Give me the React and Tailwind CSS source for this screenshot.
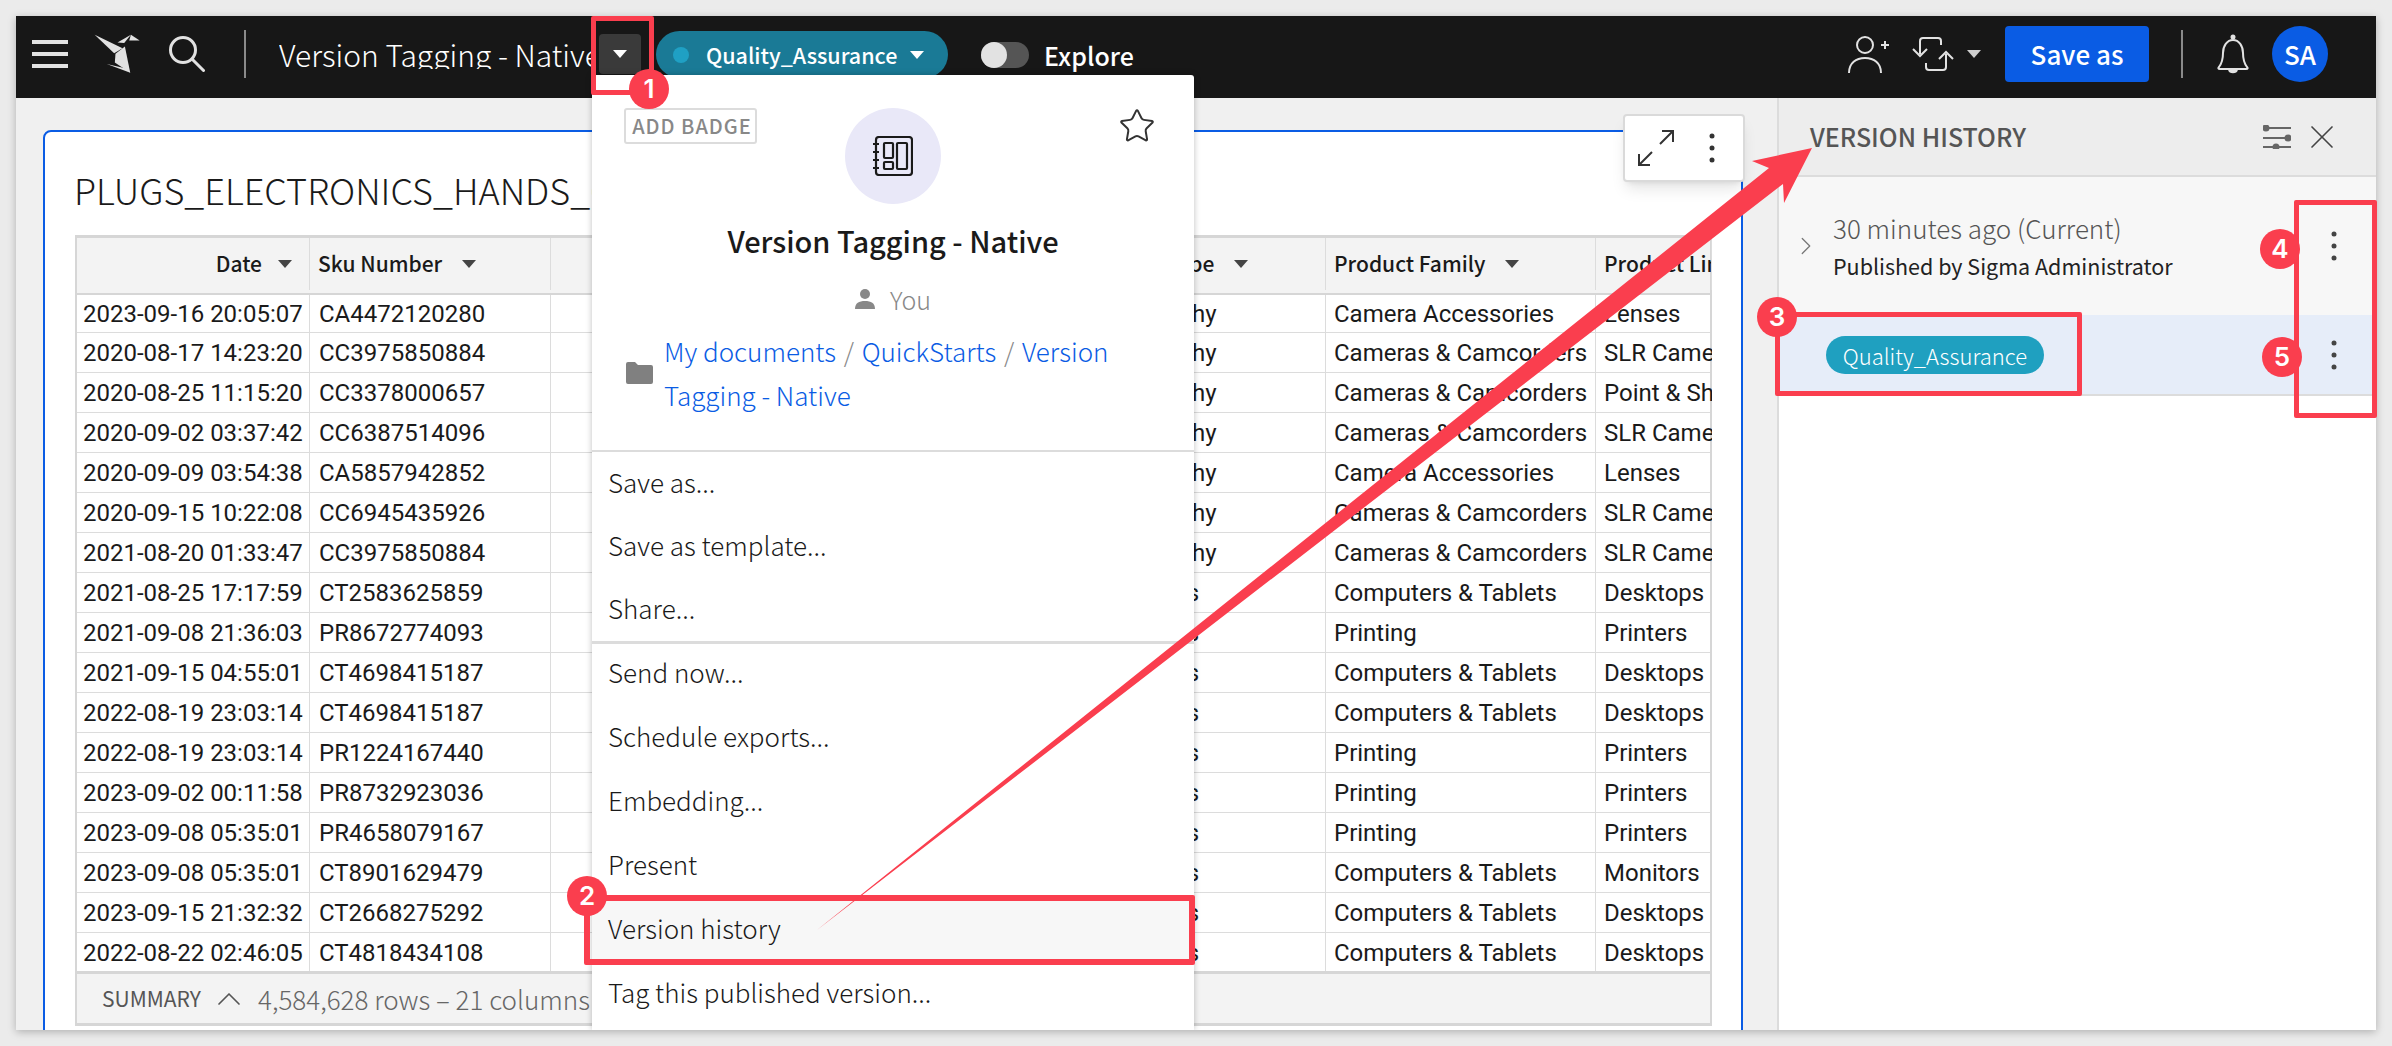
import { Star, X, ChevronRight, ChevronUp } from 'lucide-react'

const uiFont = "font-['Noto_Sans_CJK_SC','Liberation_Sans',sans-serif]"

const CC = 'Cameras & Camcorders'
const CA = 'Camera Accessories'
const CT = 'Computers & Tablets'
const rows = [
  ['2023-09-16 20:05:07', 'CA4472120280', 'Photography', CA, 'Lenses'],
  ['2020-08-17 14:23:20', 'CC3975850884', 'Photography', CC, 'SLR Cameras'],
  ['2020-08-25 11:15:20', 'CC3378000657', 'Photography', CC, 'Point & Shoot'],
  ['2020-09-02 03:37:42', 'CC6387514096', 'Photography', CC, 'SLR Cameras'],
  ['2020-09-09 03:54:38', 'CA5857942852', 'Photography', CA, 'Lenses'],
  ['2020-09-15 10:22:08', 'CC6945435926', 'Photography', CC, 'SLR Cameras'],
  ['2021-08-20 01:33:47', 'CC3975850884', 'Photography', CC, 'SLR Cameras'],
  ['2021-08-25 17:17:59', 'CT2583625859', 'Computers', CT, 'Desktops'],
  ['2021-09-08 21:36:03', 'PR8672774093', 'Computers', 'Printing', 'Printers'],
  ['2021-09-15 04:55:01', 'CT4698415187', 'Computers', CT, 'Desktops'],
  ['2022-08-19 23:03:14', 'CT4698415187', 'Computers', CT, 'Desktops'],
  ['2022-08-19 23:03:14', 'PR1224167440', 'Computers', 'Printing', 'Printers'],
  ['2023-09-02 00:11:58', 'PR8732923036', 'Computers', 'Printing', 'Printers'],
  ['2023-09-08 05:35:01', 'PR4658079167', 'Computers', 'Printing', 'Printers'],
  ['2023-09-08 05:35:01', 'CT8901629479', 'Computers', CT, 'Monitors'],
  ['2023-09-15 21:32:32', 'CT2668275292', 'Computers', CT, 'Desktops'],
  ['2022-08-22 02:46:05', 'CT4818434108', 'Computers', CT, 'Desktops'],
]

const gridCols = 'grid grid-cols-[233px_241px_522px_253px_270px_116px]'

function Caret({ className = '' }) {
  return (
    <svg width="14" height="8" viewBox="0 0 14 8" className={className}>
      <path d="M0 0h14L7 8z" fill="currentColor"/>
    </svg>
  )
}

function Dots({ className = '' }) {
  return (
    <svg width="6" height="30" viewBox="0 0 6 30" className={className}>
      <circle cx="3" cy="3" r="2.5" fill="currentColor"/>
      <circle cx="3" cy="15" r="2.5" fill="currentColor"/>
      <circle cx="3" cy="27" r="2.5" fill="currentColor"/>
    </svg>
  )
}

function Logo() {
  return (
    <svg width="47" height="42" viewBox="220 40 140 125" fill="#e2e2e2" className="shrink-0">
      <path d="M222 45 305 85 280 100z"/>
      <path d="M284 102 312 80 328 158 282 128z"/>
      <path d="M258 132 316 146 328 158z"/>
      <path d="M290 68 330 45 310 70z"/>
      <path d="M330 45 356 62 325 62z"/>
    </svg>
  )
}

function Header() {
  return (
    <div className="h-[82px] pb-1.5 bg-[#171717] flex items-center shrink-0 text-white">
      <div className="ml-4 w-9 flex flex-col gap-2 shrink-0">
        <span className="h-1 bg-[#e2e2e2]"/>
        <span className="h-1 bg-[#e2e2e2]"/>
        <span className="h-1 bg-[#e2e2e2]"/>
      </div>
      <div className="ml-[26px]"><Logo/></div>
      <svg width="36" height="36" viewBox="0 0 36 36" fill="none" stroke="#e2e2e2" strokeWidth="3" strokeLinecap="round" className="ml-7 shrink-0">
        <circle cx="14" cy="14" r="12.5"/>
        <path d="M23.5 23.5 34.5 34.5"/>
      </svg>
      <div className="ml-[39px] w-0.5 h-12 bg-[#8a8a8a] shrink-0"/>
      <div className="ml-[33px] w-[314px] text-[30px] font-light whitespace-nowrap overflow-hidden leading-none">Version Tagging - Native</div>
      <div className="ml-1.5 w-[42px] h-10 rounded bg-[#3a3a3a] flex items-center justify-center shrink-0">
        <Caret className="text-white"/>
      </div>
      <div className="ml-[15px] w-[292px] h-[47px] self-start mt-[15px] rounded-full bg-[#1a7a96] flex items-center shrink-0">
        <span className="ml-[17px] w-4 h-4 rounded-full bg-[#1fa0c4]"/>
        <span className="ml-[17px] text-[21.5px] font-medium leading-none">Quality_Assurance</span>
        <Caret className="ml-[13px] text-white"/>
      </div>
      <div className="ml-[33px] mt-0.5 w-12 h-[26px] rounded-full bg-[#555555] shrink-0">
        <div className="w-[26px] h-[26px] rounded-full bg-[#e2e2e2]"/>
      </div>
      <span className="ml-[15px] mt-0.5 text-[25px] font-medium leading-none">Explore</span>
      <div className="ml-auto flex items-center pr-12">
        <svg width="42" height="40" viewBox="0 0 42 40" fill="none" stroke="#e2e2e2" strokeWidth="2" className="shrink-0">
          <circle cx="17" cy="11" r="8"/>
          <path d="M1 39c0-10 7-15 16-15s16 5 16 15"/>
          <path d="M33 11h8M37 7v8"/>
        </svg>
        <svg width="42" height="34" viewBox="0 0 42 34" fill="none" stroke="#e2e2e2" strokeWidth="2" className="ml-[22px] shrink-0">
          <path d="M8 17V4a3 3 0 0 1 3-3h15a3 3 0 0 1 3 3v4M34 17v13a3 3 0 0 1-3 3H17a3 3 0 0 1-3-3v-4"/>
          <path d="M1 12l7 7 7-7M27 22l7-7 7 7"/>
        </svg>
        <Caret className="ml-[13px] text-[#cfcfcf]"/>
        <div className="ml-6 w-36 h-14 rounded-[4px] bg-[#0a5ce4] flex items-center justify-center text-[26px] font-medium leading-none">Save as</div>
        <div className="ml-8 w-0.5 h-12 bg-[#8a8a8a]"/>
        <svg width="36" height="40" viewBox="0 0 36 40" fill="none" stroke="#e2e2e2" strokeWidth="2" className="ml-8 shrink-0">
          <path d="M4 33c3-4 4-7 4-14 0-7 4-13 10-13s10 6 10 13c0 7 1 10 4 14 1 1 1 2-1 2H5c-2 0-2-1-1-2z"/>
          <circle cx="18" cy="3" r="1.5" fill="#e2e2e2"/>
          <path d="M14 36c1 3 7 3 8 0" fill="#e2e2e2"/>
        </svg>
        <div className="ml-[21px] w-14 h-14 rounded-full bg-[#0a5ce4] flex items-center justify-center text-[26px] font-medium leading-none">SA</div>
      </div>
    </div>
  )
}

function DataTable() {
  const heads = [
    { label: 'Date', right: true },
    { label: 'Sku Number' },
    { label: '' },
    { label: 'Product Type' },
    { label: 'Product Family' },
    { label: 'Product Line', clip: true },
  ]
  return (
    <div className="w-[1637px] border-x-2 border-[#d6d6d6] flex flex-col">
      <div className={`${gridCols} h-[58px] pb-[3px] border-t-[3px] border-[#d6d6d6] bg-[#f3f3f3]`}>
        {heads.map((h, i) => (
          <div key={i} className={`flex items-center px-2 border-r border-[#dcdcdc] overflow-hidden whitespace-nowrap text-[21px] font-medium text-[#1a1a1a] ${h.right ? 'justify-end' : ''}`}>
            <span>{h.label}</span>
            {h.label && !h.clip && <Caret className={`${h.right ? 'ml-4 mr-[9px]' : 'ml-5 mr-[10px]'} text-[#444444] shrink-0`}/>}
          </div>
        ))}
      </div>
      {rows.map((r, i) => (
        <div key={i} className={`${gridCols} h-10 box-border border-b border-[#dcdcdc] ${i === 0 ? 'border-t-2 border-t-[#d6d6d6]' : ''} font-['Roboto',sans-serif] text-[24px] text-[#1a1a1a]`}>
          <div className="pl-1.5 flex items-center border-r border-[#dcdcdc] whitespace-nowrap overflow-hidden">{r[0]}</div>
          <div className="pl-[9px] flex items-center border-r border-[#dcdcdc] whitespace-nowrap overflow-hidden">{r[1]}</div>
          <div className="border-r border-[#dcdcdc]"/>
          <div className="px-2 flex items-center border-r border-[#dcdcdc] whitespace-nowrap overflow-hidden">{r[2]}</div>
          <div className="px-2 flex items-center border-r border-[#dcdcdc] whitespace-nowrap overflow-hidden">{r[3]}</div>
          <div className="px-2 flex items-center whitespace-nowrap overflow-hidden">{r[4]}</div>
        </div>
      ))}
      <div className="h-[55px] -mt-[2px] bg-[#f3f3f3] border-y-[3px] border-[#d6d6d6] flex items-center pl-[25px] text-[#666666]">
        <span className="text-[21px] text-[#555555]">SUMMARY</span>
        <ChevronUp size={40} strokeWidth={1} className="ml-2 text-[#555555]"/>
        <span className="ml-[9px] text-[26px] font-light whitespace-nowrap">4,584,628 rows – 21 columns</span>
      </div>
    </div>
  )
}

function Main() {
  return (
    <div className="relative flex-1 bg-[#f0f0f0] pl-[27px] pt-8 overflow-hidden">
      <div className="w-[1700px] h-[1000px] bg-white border-2 border-[#0a5ce4] rounded-tl-lg pl-[30px]">
        <div className="h-[103px] pt-[25px] -ml-px text-[36px] leading-[64px] text-[#1a1a1a] font-light whitespace-nowrap">PLUGS_ELECTRONICS_HANDS_ON_LAB</div>
        <DataTable/>
      </div>
      <div className="absolute left-[1607px] top-[16px] w-[122px] h-[68px] bg-white rounded-[4px] border-2 border-[#dadada] shadow-lg flex items-center">
        <svg width="36" height="36" viewBox="0 0 36 36" fill="none" stroke="#333333" strokeWidth="2" className="ml-[13px]">
          <path d="M22 14 35 1M24 1h11v11M14 22 1 35M1 24v11h11"/>
        </svg>
        <Dots className="ml-[35px] text-[#333333]"/>
      </div>
    </div>
  )
}

function VersionPanel() {
  return (
    <div className="w-[599px] shrink-0 border-l-2 border-[#dcdcdc] bg-white flex flex-col">
      <div className="h-[79px] bg-[#ededed] border-b-2 border-[#dcdcdc] flex items-center pl-[31px] shrink-0">
        <span className="text-[25px] font-medium text-[#555555] leading-none">VERSION HISTORY</span>
        <svg width="28" height="24" viewBox="0 0 28 24" fill="none" stroke="#666666" strokeWidth="2" className="ml-auto">
          <path d="M2 3h26M0 13h26M0 22h28"/>
          <circle cx="3" cy="3" r="2.5" fill="#666666"/>
          <circle cx="25" cy="13" r="2.5" fill="#666666"/>
          <circle cx="13" cy="22" r="2.5" fill="#666666"/>
        </svg>
        <X size={40} strokeWidth={1} className="ml-[11px] mr-[34px] text-[#444444]"/>
      </div>
      <div className="h-[138px] bg-[#f7f7f7] flex items-center relative shrink-0">
        <ChevronRight size={30} strokeWidth={1} className="ml-3 text-[#777777]"/>
        <div className="ml-[12px] flex flex-col gap-[9px]">
          <span className="text-[26px] font-light text-[#555555] leading-[30px]">30 minutes ago (Current)</span>
          <span className="text-[21.5px] text-[#222222] leading-[28px]">Published by Sigma Administrator</span>
        </div>
        <Dots className="ml-auto mr-[39px] text-[#444444]"/>
      </div>
      <div className="h-[81px] bg-[#e6edf9] border-b-2 border-[#dcdcdc] flex items-center shrink-0">
        <div className="ml-[47px] w-[218px] h-[38px] rounded-full bg-[#1fa0c0] flex items-center justify-center text-white text-[22px] font-light leading-none">Quality_Assurance</div>
        <Dots className="ml-auto mr-[39px] text-[#444444]"/>
      </div>
    </div>
  )
}

function DocMenu() {
  const group1 = ['Save as...', 'Save as template...', 'Share...']
  const group2 = ['Send now...', 'Schedule exports...', 'Embedding...', 'Present', 'Version history', 'Tag this published version...']
  return (
    <div className="absolute left-[576px] top-[59px] w-[602px] h-[955px] bg-white shadow-[0_0_6px_rgba(0,0,0,0.25)] rounded-t-[3px] flex flex-col overflow-hidden">
      <div className="relative h-[377px] border-b-2 border-[#dcdcdc] shrink-0 flex flex-col items-center">
        <div className="absolute left-8 top-[33px] w-[133px] h-9 pl-[3px] border-2 border-[#dcdcdc] rounded-[3px] flex items-center justify-center text-[20px] font-medium tracking-[1px] text-[#888888] leading-none">ADD BADGE</div>
        <Star size={38} strokeWidth={1.25} className="absolute left-[526px] top-[32px] text-[#333333]"/>
        <div className="mt-[33px] w-24 h-24 rounded-full bg-[#e9e8f8] flex items-center justify-center">
          <svg width="40" height="40" viewBox="0 0 40 40" fill="none" stroke="#1a1a1a" strokeWidth="2.2">
            <rect x="3" y="1" width="36" height="38" rx="3"/>
            <path d="M0 8h6M0 16h6M0 24h6M0 32h6"/>
            <rect x="11" y="7" width="9" height="15" rx="1"/>
            <rect x="11" y="26" width="9" height="7" rx="1"/>
            <rect x="24" y="7" width="10" height="26" rx="1"/>
          </svg>
        </div>
        <div className="mt-[18px] text-[29px] font-medium text-[#1a1a1a] leading-9">Version Tagging - Native</div>
        <div className="mt-[25px] flex items-center text-[#888888] text-[25px] font-light leading-8">
          <svg width="20" height="20" viewBox="0 0 20 20" fill="#888888"><circle cx="10" cy="5" r="5"/><path d="M0 20c0-6 4-8 10-8s10 2 10 8z"/></svg>
          <span className="ml-[15px]">You</span>
        </div>
        <div className="mt-[14px] w-full pl-[34px] flex items-center">
          <svg width="27" height="22" viewBox="0 0 27 22" fill="#808080" className="shrink-0"><path d="M0 2a2 2 0 0 1 2-2h7l3 3h13a2 2 0 0 1 2 2v15a2 2 0 0 1-2 2H2a2 2 0 0 1-2-2z"/></svg>
          <div className="ml-[11px] w-[480px] text-[26px] font-light leading-[44px] text-[#0a5ce4]">
            My documents <span className="text-[#888888] mx-0.5">/</span> QuickStarts <span className="text-[#888888] mx-0.5">/</span> Version Tagging - Native
          </div>
        </div>
      </div>
      <div className="border-b-[3px] border-[#dcdcdc]">
        {group1.map(t => (
          <div key={t} className="h-[63px] pl-4 pb-[3px] flex items-center text-[26px] font-light text-[#1a1a1a] leading-none">{t}</div>
        ))}
      </div>
      <div className="-mt-[3px]">
        {group2.map(t => (
          <div key={t} className={`h-16 pl-4 pb-[3px] flex items-center text-[26px] font-light text-[#1a1a1a] leading-none ${t === 'Version history' ? 'bg-[#f7f7f7]' : ''}`}>{t}</div>
        ))}
      </div>
    </div>
  )
}

function Callout({ n, x, y }) {
  return (
    <div
      style={{ left: x - 20, top: y - 20 }}
      className="absolute w-10 h-10 rounded-full bg-[#fa3e4e] text-white flex items-center justify-center text-[26px] font-semibold font-['Inter',sans-serif] leading-none"
    >{n}</div>
  )
}

function Box({ x, y, w, h, t = 5 }) {
  return (
    <div
      style={{ left: x, top: y, width: w, height: h, borderWidth: t }}
      className="absolute border-solid border-[#fa3e4e] rounded-[2px]"
    />
  )
}

export default function App() {
  return (
    <div className={`relative w-[2392px] h-[1046px] bg-[#ebebeb] p-4 overflow-hidden ${uiFont}`}>
      <div className="relative h-[1014px] flex flex-col shadow-[0_2px_8px_rgba(0,0,0,0.25)] overflow-hidden">
        <Header/>
        <div className="flex flex-1 min-h-0">
          <Main/>
          <VersionPanel/>
        </div>
        <DocMenu/>
      </div>

      {/* annotations sit on top of the screenshot */}
      <Box x={591} y={16} w={63} h={79}/>
      <Box x={584} y={895} w={611} h={70} t={6}/>
      <Box x={1775} y={312} w={307} h={84}/>
      <Box x={2294} y={200} w={83} h={218}/>
      <svg width="2392" height="1046" viewBox="0 0 2392 1046" className="absolute left-0 top-0 pointer-events-none">
        <path d="M1812 148 1752 161 1769 168 817 930 1783 184 1784 203z" fill="#fa3e4e"/>
      </svg>
      <Callout n="1" x={649} y={89}/>
      <Callout n="2" x={587} y={896}/>
      <Callout n="3" x={1777} y={317}/>
      <Callout n="4" x={2280} y={249}/>
      <Callout n="5" x={2282} y={357}/>
    </div>
  )
}
